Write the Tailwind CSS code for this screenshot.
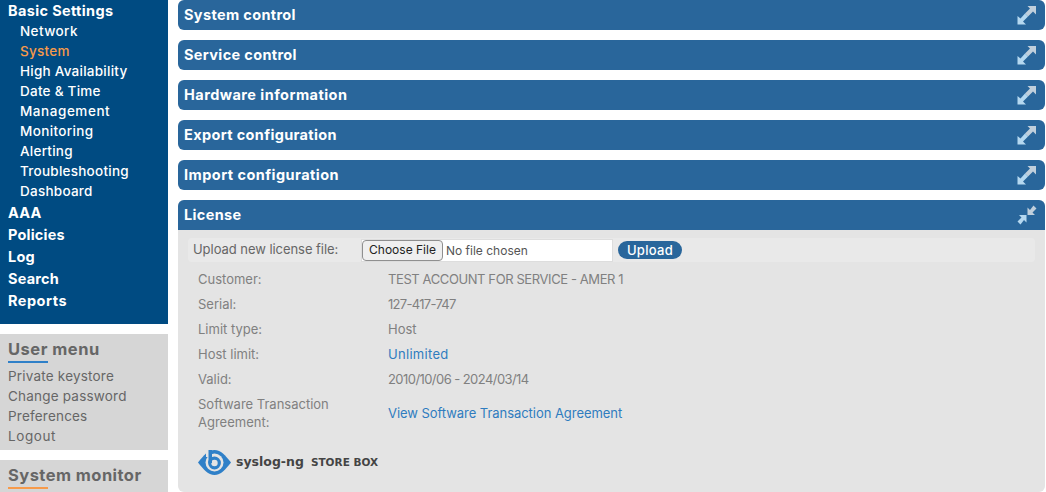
<!DOCTYPE html>
<html lang="en">
<head>
    <meta charset="UTF-8">
    <title>System</title>
    <script src="https://cdn.jsdelivr.net/npm/@tailwindcss/browser@4"></script>
</head>
<body class="h-[492px] overflow-hidden bg-white font-['Inter',sans-serif] text-[13px]">
<div class="flex h-[492px] overflow-hidden">

    <!-- Sidebar -->
    <aside class="w-[168px] shrink-0">
        <nav class="h-[324px] bg-[#004b82] pl-2 text-white">
            <div class="h-[21px] text-[14.5px] leading-[21px] font-bold tracking-[0.35px]">Basic Settings</div>
            <ul class="pl-3 text-[13.5px] leading-5 font-medium tracking-[0.25px]">
                <li class="tracking-[0.4px]">Network</li>
                <li class="text-[#f79a4a]">System</li>
                <li>High Availability</li>
                <li>Date &amp; Time</li>
                <li class="tracking-[0.55px]">Management</li>
                <li class="tracking-[0.35px]">Monitoring</li>
                <li>Alerting</li>
                <li>Troubleshooting</li>
                <li>Dashboard</li>
            </ul>
            <ul class="pt-px text-[14.5px] leading-[22px] font-bold tracking-[0.2px]">
                <li>AAA</li>
                <li>Policies</li>
                <li>Log</li>
                <li>Search</li>
                <li class="tracking-[0.5px]">Reports</li>
            </ul>
        </nav>

        <div class="mt-[10px] h-[116px] bg-[#d6d6d6] pt-1 pl-2 text-[#666]">
            <h3 class="text-[16.5px] leading-[22px] font-bold tracking-[0.5px]">User menu</h3>
            <div class="mt-px h-[2px] w-10 bg-[#2f80c8]"></div>
            <ul class="mt-[3px] text-[13.5px] leading-5 tracking-[0.2px]">
                <li>Private keystore</li>
                <li>Change password</li>
                <li>Preferences</li>
                <li class="tracking-[0.6px]">Logout</li>
            </ul>
        </div>

        <div class="mt-[10px] h-[40px] bg-[#d6d6d6] pt-1 pl-2 text-[#666]">
            <h3 class="text-[16.5px] leading-[22px] font-bold tracking-[0.45px]">System monitor</h3>
            <div class="mt-px h-[2px] w-10 bg-[#f79a4a]"></div>
        </div>
    </aside>

    <!-- Main -->
    <main class="ml-[10px] flex w-[867px] flex-col gap-[10px]">
        <div class="flex h-[30px] shrink-0 items-center justify-between rounded-md bg-[#29669b] pr-2 pl-[6px] text-[14.5px] font-bold tracking-[0.35px] text-white">
            <span>System control</span>
            <svg class="h-5 w-5" viewBox="0 0 20 20"><path d="M10.500 1H19V9.500L16 6.500L11 11.500L8 8.500L13 3.500Z" fill="#c0cfdc"/><path d="M8 8.500L11 11.500L6 16.500L9 19.500H0.500V11L3.500 13.500Z" fill="#b5d8f0"/></svg>
        </div>
        <div class="flex h-[30px] shrink-0 items-center justify-between rounded-md bg-[#29669b] pr-2 pl-[6px] text-[14.5px] font-bold tracking-[0.35px] text-white">
            <span>Service control</span>
            <svg class="h-5 w-5" viewBox="0 0 20 20"><path d="M10.500 1H19V9.500L16 6.500L11 11.500L8 8.500L13 3.500Z" fill="#c0cfdc"/><path d="M8 8.500L11 11.500L6 16.500L9 19.500H0.500V11L3.500 13.500Z" fill="#b5d8f0"/></svg>
        </div>
        <div class="flex h-[30px] shrink-0 items-center justify-between rounded-md bg-[#29669b] pr-2 pl-[6px] text-[14.5px] font-bold tracking-[0.45px] text-white">
            <span>Hardware information</span>
            <svg class="h-5 w-5" viewBox="0 0 20 20"><path d="M10.500 1H19V9.500L16 6.500L11 11.500L8 8.500L13 3.500Z" fill="#c0cfdc"/><path d="M8 8.500L11 11.500L6 16.500L9 19.500H0.500V11L3.500 13.500Z" fill="#b5d8f0"/></svg>
        </div>
        <div class="flex h-[30px] shrink-0 items-center justify-between rounded-md bg-[#29669b] pr-2 pl-[6px] text-[14.5px] font-bold tracking-[0.35px] text-white">
            <span>Export configuration</span>
            <svg class="h-5 w-5" viewBox="0 0 20 20"><path d="M10.500 1H19V9.500L16 6.500L11 11.500L8 8.500L13 3.500Z" fill="#c0cfdc"/><path d="M8 8.500L11 11.500L6 16.500L9 19.500H0.500V11L3.500 13.500Z" fill="#b5d8f0"/></svg>
        </div>
        <div class="flex h-[30px] shrink-0 items-center justify-between rounded-md bg-[#29669b] pr-2 pl-[6px] text-[14.5px] font-bold tracking-[0.45px] text-white">
            <span>Import configuration</span>
            <svg class="h-5 w-5" viewBox="0 0 20 20"><path d="M10.500 1H19V9.500L16 6.500L11 11.500L8 8.500L13 3.500Z" fill="#c0cfdc"/><path d="M8 8.500L11 11.500L6 16.500L9 19.500H0.500V11L3.500 13.500Z" fill="#b5d8f0"/></svg>
        </div>

        <!-- License panel -->
        <section class="h-[292px] shrink-0 rounded-md bg-[#e4e4e4]">
            <div class="flex h-[30px] items-center justify-between rounded-t-md bg-[#29669b] pr-2 pl-[6px] text-[14.5px] font-bold tracking-[0.35px] text-white">
                <span>License</span>
                <svg class="h-5 w-5" viewBox="0 0 20 20"><path d="M16.500 0.500L19.500 3.500L15.500 7.500L18 10H10.500V2.500L13 5Z" fill="#c0cfdc"/><path d="M3.500 19.500L0.500 16.500L4.500 12.500L2 10H9.500V17.500L7 15Z" fill="#b5d8f0"/></svg>
            </div>
            <div class="mx-[10px] mt-2 flex h-6 w-[847px] items-center rounded bg-[#e9e9e9] pl-[5px] text-[#666]">
                <span class="w-[169px] tracking-[-0.05px]">Upload new license file:</span>
                <input type="file" class="-ml-px h-[23px] w-[252px] border border-[#ddd] bg-white text-[12px] text-[#555] file:mr-[3px] file:h-[21px] file:w-[81px] file:rounded-sm file:border file:border-[#8f8f8f] file:bg-[#efefef] file:text-[12px] file:text-[#222]">
                <button class="ml-[5px] h-[18px] w-16 rounded-full bg-[#29669b] text-[13px] leading-[18px] font-medium tracking-[0.3px] text-white">Upload</button>
            </div>

            <dl class="mt-[5px] grid grid-cols-[190px_1fr] pl-5 leading-[25px] text-[#808080]">
                <dt>Customer:</dt><dd class="tracking-[-0.4px]">TEST ACCOUNT FOR SERVICE - AMER 1</dd>
                <dt>Serial:</dt><dd class="tracking-[-0.7px]">127-417-747</dd>
                <dt>Limit type:</dt><dd>Host</dd>
                <dt>Host limit:</dt><dd class="tracking-[0.3px] text-[#2f7cbf]">Unlimited</dd>
                <dt>Valid:</dt><dd class="tracking-[-0.56px]">2010/10/06 - 2024/03/14</dd>
                <dt class="w-[150px] pt-[3px] leading-[18px]">Software Transaction Agreement:</dt>
                <dd class="self-center pt-[3px] tracking-[-0.05px] text-[#2f7cbf]">View Software Transaction Agreement</dd>
            </dl>

            <!-- Logo -->
            <div class="mt-[19px] ml-5 flex items-center">
                <svg class="h-[25px] w-[33px]" viewBox="0 0 33 25">
                    <path d="M0 12.500C6 5 10 0 16.500 0C23 0 27 5 33 12.500C27 20 23 25 16.500 25C10 25 6 20 0 12.500Z" fill="#2f80c8"/>
                    <circle cx="16.500" cy="12.500" r="9" fill="#e4e4e4"/>
                    <path d="M8 0H11V7H8Z" fill="#e4e4e4"/>
                    <path d="M10.500 0H14V13H10.500Z" fill="#2f80c8"/>
                    <circle cx="16.500" cy="13" r="4.800" fill="none" stroke="#2f80c8" stroke-width="3.200"/>
                </svg>
                <span class="ml-[5px] font-['DejaVu_Sans',sans-serif] text-[12.5px] font-bold text-[#444]">syslog-ng</span>
                <span class="ml-[7px] font-['DejaVu_Sans',sans-serif] text-[10.5px] font-bold text-[#444]">STORE BOX</span>
            </div>
        </section>
    </main>
</div>
</body>
</html>
